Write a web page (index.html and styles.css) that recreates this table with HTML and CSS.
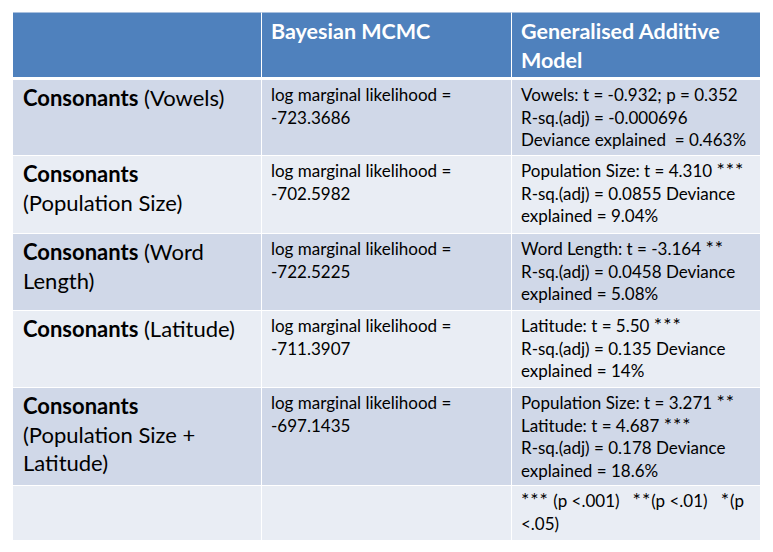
FILE: index.html
```html
<!DOCTYPE html>
<html>
<head>
<meta charset="utf-8">
<link rel="stylesheet" href="styles.css">
</head>
<body>
<table class="results">
  <colgroup>
    <col class="c1"><col class="c2"><col class="c3">
  </colgroup>
  <thead>
    <tr class="head">
      <th></th>
      <th>Bayesian MCMC</th>
      <th>Generalised Additive<br>Model</th>
    </tr>
  </thead>
  <tbody>
    <tr class="r1 dark">
      <td class="label"><b>Consonants</b> (Vowels)</td>
      <td>log marginal likelihood =<br>-723.3686</td>
      <td>Vowels: t = -0.932; p = 0.352<br>R-sq.(adj) = -0.000696<br>Deviance explained &nbsp;= 0.463%</td>
    </tr>
    <tr class="r2 light">
      <td class="label"><b>Consonants</b><br>(Population Size)</td>
      <td>log marginal likelihood =<br>-702.5982</td>
      <td>Population Size: t = 4.310 <span class="stars">***</span><br>R-sq.(adj) = 0.0855 Deviance<br>explained = 9.04%</td>
    </tr>
    <tr class="r3 dark">
      <td class="label"><b>Consonants</b> (Word<br>Length)</td>
      <td>log marginal likelihood =<br>-722.5225</td>
      <td>Word Length: t = -3.164 <span class="stars">**</span><br>R-sq.(adj) = 0.0458 Deviance<br>explained = 5.08%</td>
    </tr>
    <tr class="r4 light">
      <td class="label"><b>Consonants</b> (Latitude)</td>
      <td>log marginal likelihood =<br>-711.3907</td>
      <td>Latitude: t = 5.50 <span class="stars">***</span><br>R-sq.(adj) = 0.135 Deviance<br>explained = 14%</td>
    </tr>
    <tr class="r5 dark">
      <td class="label"><b>Consonants</b><br>(Population Size +<br>Latitude)</td>
      <td>log marginal likelihood =<br>-697.1435</td>
      <td>Population Size: t = 3.271 <span class="stars">**</span><br>Latitude: t = 4.687 <span class="stars">***</span><br>R-sq.(adj) = 0.178 Deviance<br>explained = 18.6%</td>
    </tr>
    <tr class="r6 light">
      <td class="label"></td>
      <td></td>
      <td><span class="stars">***</span> (p &lt;.001) &nbsp;&nbsp;<span class="stars">**</span>(p &lt;.01) &nbsp;&nbsp;<span class="stars">*</span>(p<br>&lt;.05)</td>
    </tr>
  </tbody>
</table>
</body>
</html>
```

FILE: styles.css
```css
html, body {
  margin: 0;
  padding: 0;
  background: #ffffff;
}

body {
  width: 773px;
  height: 552px;
  overflow: hidden;
}

.results {
  margin: 12px 0 0 13px;
  width: 747px;
  table-layout: fixed;
  border-collapse: separate;
  border-spacing: 0;
  font-family: Lato, "Liberation Sans", sans-serif;
  color: #000000;
}

.c1 { width: 249px; }
.c2 { width: 250px; }
.c3 { width: 248px; }

.results th,
.results td {
  vertical-align: top;
  text-align: left;
  white-space: nowrap;
  border-right: 1px solid #ffffff;
  border-bottom: 1px solid #ffffff;
  box-sizing: border-box;
}

.results th:last-child,
.results td:last-child {
  border-right: none;
}

.head th {
  background: #4f81bd;
  color: #ffffff;
  font-weight: bold;
  font-size: 21.5px;
  line-height: 28.5px;
  padding: 4px 6px 0 9px;
  height: 68px;
  border-bottom: 3px solid #ffffff;
  border-top: 1px solid #a9c0de;
}

.results td {
  font-size: 17px;
  line-height: 22.5px;
  padding: 4px 4px 0 9px;
}

.results td.label {
  font-size: 22px;
  line-height: 28.5px;
  padding: 4px 4px 0 10px;
}

.stars {
  font-size: 1.15em;
  line-height: 0;
  letter-spacing: 1px;
}

.dark td { background: #d0d8e8; }
.light td { background: #e9edf4; }

.r1 td { height: 76px; }
.r2 td { height: 78px; }
.r3 td { height: 77px; }
.r4 td { height: 77px; }
.r5 td { height: 98px; }
.r6 td { height: 54px; border-bottom: none; }
```
